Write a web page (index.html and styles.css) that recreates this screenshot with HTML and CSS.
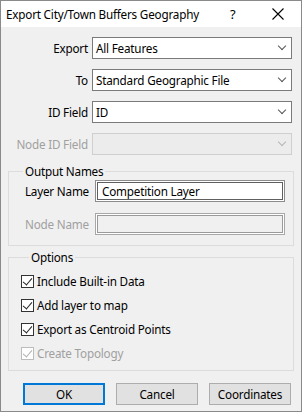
FILE: index.html
```html
<!DOCTYPE html>
<html>
<head>
  <title>Export City/Town Buffers Geography</title>
  <link rel="stylesheet" href="styles.css">
</head>
<body>
  <div class="dialog">
    <div class="titlebar">
      <span class="title">Export City/Town Buffers Geography</span>
      <span class="help">?</span>
      <span class="close">
        <svg width="12" height="12" viewBox="0 0 12 12"><path d="M0.5 0.5 L11.5 11.5 M11.5 0.5 L0.5 11.5" stroke="#000" stroke-width="1.1" fill="none"/></svg>
      </span>
    </div>

    <div class="content">
      <div class="fields">
        <div class="field-row">
          <label>Export</label>
          <div class="select">All Features<span class="chevron"></span></div>
        </div>
        <div class="field-row">
          <label>To</label>
          <div class="select">Standard Geographic File<span class="chevron"></span></div>
        </div>
        <div class="field-row">
          <label>ID Field</label>
          <div class="select">ID<span class="chevron"></span></div>
        </div>
        <div class="field-row disabled">
          <label>Node ID Field</label>
          <div class="select"><span class="chevron"></span></div>
        </div>
      </div>

      <fieldset class="group names">
        <legend>Output Names</legend>
        <div class="name-row">
          <label>Layer Name</label>
          <div class="textbox">Competition Layer</div>
        </div>
        <div class="name-row disabled">
          <label>Node Name</label>
          <div class="textbox"></div>
        </div>
      </fieldset>

      <fieldset class="group options">
        <legend>Options</legend>
        <div class="check"><span class="box checked"></span>Include Built-in Data</div>
        <div class="check"><span class="box checked"></span>Add layer to map</div>
        <div class="check"><span class="box checked"></span>Export as Centroid Points</div>
        <div class="check disabled"><span class="box checked"></span>Create Topology</div>
      </fieldset>

      <div class="buttons">
        <button class="default">OK</button>
        <button>Cancel</button>
        <button>Coordinates</button>
      </div>
    </div>
  </div>
</body>
</html>
```

FILE: styles.css
```css
  body {
    margin: 0;
    background: #ffffff;
    font-family: "Noto Sans", Arial, sans-serif;
    font-size: 11.7px;
    letter-spacing: -0.2px;
    color: #000;
  }

  .dialog {
    width: 300px;
    height: 410px;
    border: 1px solid #8a8a8a;
    background: #f0f0f0;
    display: flex;
    flex-direction: column;
  }

  .titlebar {
    height: 26px;
    background: #ffffff;
    display: flex;
    align-items: center;
    padding-left: 5px;
  }

  .title {
    flex: 1;
    white-space: nowrap;
  }

  .help {
    width: 14px;
    font-size: 13px;
    margin-right: 28px;
  }

  .close {
    display: flex;
    margin-right: 17px;
  }

  .content {
    padding: 10px 7px 0 7px;
  }

  /* top combo rows */
  .fields {
    display: flex;
    flex-direction: column;
    gap: 10px;
    margin-right: 2px;
  }

  .field-row {
    display: grid;
    grid-template-columns: 80px 1fr;
    column-gap: 4px;
    align-items: center;
    height: 22px;
  }

  .field-row label,
  .name-row label {
    text-align: right;
    white-space: nowrap;
  }

  .select {
    position: relative;
    height: 20px;
    line-height: 20px;
    border: 1px solid #7a7a7a;
    background: #ffffff;
    padding-left: 3px;
  }

  .chevron {
    position: absolute;
    right: 6px;
    top: 5px;
    width: 5px;
    height: 5px;
    border-right: 1px solid #555;
    border-bottom: 1px solid #555;
    transform: rotate(45deg);
  }

  .disabled label {
    color: #a0a0a0;
  }

  .field-row.disabled .select {
    background: #ececec;
    border-color: #cfcfcf;
  }

  .field-row.disabled .chevron {
    border-color: #b5b5b5;
  }

  /* group boxes */
  .group {
    margin: 0;
    border: 1px solid #dcdcdc;
    padding: 0 8px 0 8px;
  }

  .group legend {
    padding: 0 2px;
    margin-left: 6px;
    line-height: 14px;
  }

  .names {
    margin-top: 9px;
    padding-top: 2px;
    padding-bottom: 10px;
    display: flex;
    flex-direction: column;
    gap: 11px;
  }

  .name-row {
    display: grid;
    grid-template-columns: 72px 1fr;
    column-gap: 6px;
    align-items: center;
    height: 22px;
  }

  .textbox {
    height: 16px;
    line-height: 16px;
    border: 1px solid #8c8c8c;
    box-shadow: inset 0 0 0 1px #ffffff, inset 0 0 0 2px #5f5f5f;
    background: #ffffff;
    padding: 2px 6px;
  }

  .name-row.disabled .textbox {
    background: #f0f0f0;
    border-color: #a8a8a8;
    box-shadow: inset 0 0 0 1px #ffffff, inset 0 0 0 2px #9a9a9a;
  }

  .options {
    margin-top: 4px;
    padding: 9px 8px 9px 12px;
    display: flex;
    flex-direction: column;
    gap: 8px;
  }

  .options legend {
    margin-left: 8px;
  }

  .check {
    display: flex;
    align-items: center;
    height: 16px;
    white-space: nowrap;
  }

  .box {
    width: 11px;
    height: 11px;
    border: 1px solid #333333;
    background: #ffffff;
    margin-right: 3px;
    position: relative;
  }

  .box.checked::after {
    content: "";
    position: absolute;
    left: 3px;
    top: 0px;
    width: 4px;
    height: 8px;
    border-right: 1px solid #222;
    border-bottom: 1px solid #222;
    transform: rotate(40deg);
  }

  .check.disabled {
    color: #a0a0a0;
  }

  .check.disabled .box {
    border-color: #bcbcbc;
  }

  .check.disabled .box::after {
    border-color: #b0b0b0;
  }

  /* bottom buttons */
  .buttons {
    display: flex;
    justify-content: flex-end;
    gap: 11px;
    margin-top: 12px;
    margin-right: 3px;
  }

  button {
    width: 82px;
    height: 22px;
    font-family: "Noto Sans", Arial, sans-serif;
    font-size: 11.7px;
    letter-spacing: -0.2px;
    color: #000;
    background: #e1e1e1;
    border: 1px solid #adadad;
    padding: 0;
  }

  button.default {
    border: 2px solid #0078d7;
  }
```
